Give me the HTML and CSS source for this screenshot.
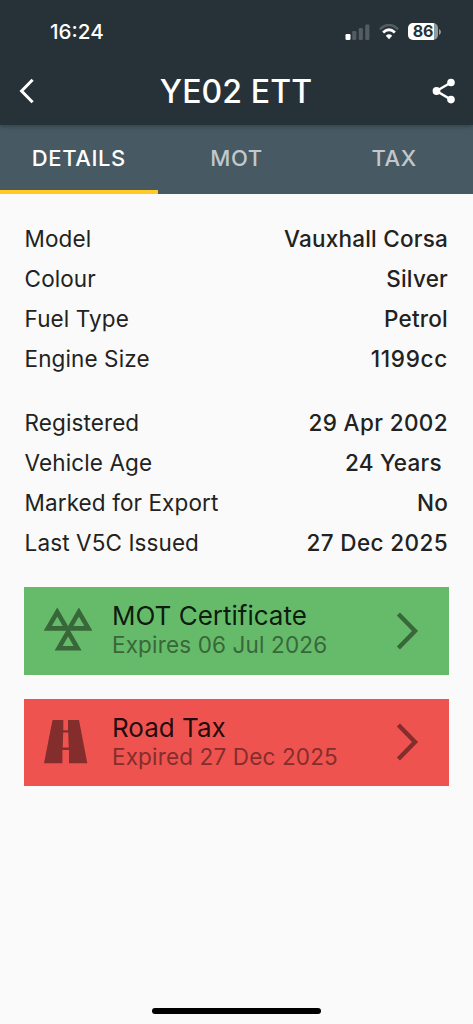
FILE: index.html
```html
<!DOCTYPE html>
<html lang="en">
<head>
<meta charset="utf-8">
<title>YE02 ETT</title>
<link rel="stylesheet" href="styles.css">
</head>
<body>
<div class="screen">
  <header class="header">
    <div class="status">
      <span class="clock">16:24</span>
      <div class="indicators">
        <svg class="signal" width="25" height="16" viewBox="0 0 25 16"><rect x="0.5" y="10" width="5" height="6" rx="1.3" fill="#fff"/><g fill="#535c60"><rect x="7.2" y="7" width="4.2" height="9" rx="1.2"/><rect x="13.7" y="4" width="4.2" height="12" rx="1.2"/><rect x="20.2" y="0.5" width="4.2" height="15.5" rx="1.2"/></g></svg>
        <svg class="wifi" width="20" height="16" viewBox="0 0 20 16"><path d="M1 5.2Q10-3.2 19 5.2" fill="none" stroke="#535c60" stroke-width="2.6"/><path d="M4.1 8.5Q10 3 15.9 8.5" fill="none" stroke="#fff" stroke-width="2.7"/><path d="M6.8 11.7Q10 9 13.2 11.7L10 15.2Z" fill="#fff"/></svg>
        <div class="battery"><span class="level">86</span></div>
        <svg class="cap" width="2" height="6" viewBox="0 0 2 6"><path d="M0 0Q2 1 2 3T0 6Z" fill="#929a9d"/></svg>
      </div>
    </div>
    <div class="toolbar">
      <svg width="16" height="26" viewBox="0 0 16 26"><path d="M13.6 1.8L2.6 13L13.6 24.2" fill="none" stroke="#fff" stroke-width="3"/></svg>
      <h1 class="title">YE02 ETT</h1>
      <svg width="24" height="26" viewBox="0 0 24 26"><path d="M19 4.5L4.5 13L19 21.6" fill="none" stroke="#fff" stroke-width="2.4"/><g fill="#fff"><circle cx="19" cy="4.5" r="3.8"/><circle cx="4.5" cy="13" r="3.9"/><circle cx="19" cy="21.6" r="3.8"/></g></svg>
    </div>
  </header>
  <nav class="tabs">
    <div class="tab active"><span>DETAILS</span></div>
    <div class="tab"><span>MOT</span></div>
    <div class="tab"><span>TAX</span></div>
  </nav>
  <main class="content">
    <section class="group">
      <div class="row"><span>Model</span><span class="value">Vauxhall Corsa</span></div>
      <div class="row"><span>Colour</span><span class="value">Silver</span></div>
      <div class="row"><span>Fuel Type</span><span class="value">Petrol</span></div>
      <div class="row"><span>Engine Size</span><span class="value numeric">1199cc</span></div>
    </section>
    <section class="group">
      <div class="row"><span>Registered</span><span class="value date">29 Apr 2002</span></div>
      <div class="row"><span>Vehicle Age</span><span class="value">24 Years </span></div>
      <div class="row"><span>Marked for Export</span><span class="value">No</span></div>
      <div class="row"><span>Last V5C Issued</span><span class="value date">27 Dec 2025</span></div>
    </section>
    <div class="cards">
      <div class="card valid">
        <svg class="icon" width="48" height="46" viewBox="0 0 48 46"><path fill="none" stroke="currentColor" stroke-width="4.6" d="M13.3 5L3.8 21.4H22.8Z M34.9 5L25.4 21.4H44.4Z M24.1 24.9L14.6 41.3H33.6Z"/></svg>
        <div class="text"><span class="name">MOT Certificate</span><span class="expiry">Expires 06 Jul 2026</span></div>
        <svg width="24" height="38" viewBox="0 0 24 38"><path d="M2.4 2L19 19L2.4 36" fill="none" stroke="currentColor" stroke-width="4.4"/></svg>
      </div>
      <div class="card expired">
        <svg class="icon" width="48" height="46" viewBox="0 0 48 46"><path fill="currentColor" d="M8.5 1H19.3V11.3H24V1H35L43.3 44.3H25V31H18.4V44.3H0Z"/><path class="gap" d="M19.2 13.5H24.2L24.7 28.6H18.7Z"/></svg>
        <div class="text"><span class="name">Road Tax</span><span class="expiry">Expired 27 Dec 2025</span></div>
        <svg width="24" height="38" viewBox="0 0 24 38"><path d="M2.4 2L19 19L2.4 36" fill="none" stroke="currentColor" stroke-width="4.4"/></svg>
      </div>
    </div>
  </main>
  <footer class="home"><div class="home-bar"></div></footer>
</div>
</body>
</html>
```
FILE: styles.css
```css
* { box-sizing: border-box; }
body { margin: 0; background: #fafafa; font-family: Inter, "Liberation Sans", sans-serif; color: #222; }
svg { display: block; flex: none; }
.screen { width: 473px; height: 1024px; display: flex; flex-direction: column; overflow: hidden; }
.header { position: relative; height: 125px; flex: none; background: #273238; color: #fff; box-shadow: 0 1px 5px rgba(0, 0, 0, .35); }
.status { height: 62px; padding: 1px 32px 0 50px; display: flex; align-items: center; justify-content: space-between; }
.clock { font-size: 20.6px; font-weight: 550; letter-spacing: 0; }
.indicators { display: flex; align-items: center; }
.wifi { margin: 0 9px; }
.battery { width: 30px; height: 17px; border-radius: 5px; display: grid; place-items: center; background: linear-gradient(90deg, #fff 86%, #929a9d 86%); color: #273238; }
.level { font-size: 16px; line-height: 17px; font-weight: 700; letter-spacing: -.2px; }
.cap { margin-left: 1px; }
.toolbar { height: 58px; padding: 0 17px 0 19px; display: flex; align-items: center; justify-content: space-between; }
.title { margin: 1px 0 0 5px; font-size: 32px; font-weight: 500; letter-spacing: .1px; }
.tabs { height: 69px; flex: none; display: grid; grid-template-columns: repeat(3, 1fr); background: #475a64; }
.tab { display: grid; place-items: center; padding-bottom: 4px; font-size: 22px; font-weight: 500; letter-spacing: .6px; color: #c2c8cb; border-bottom: 0 solid #ffca28; }
.tab.active { color: #fff; border-bottom-width: 4px; padding-bottom: 0; }
.content { flex: 1; padding: 24px 24px 0; }
.group { margin-bottom: 24px; }
.row { height: 40px; padding: 0 1px 0 .6px; display: flex; align-items: center; justify-content: space-between; font-size: 22.5px; letter-spacing: .1px; white-space: pre; }
.value { font-weight: 500; letter-spacing: .22px; }
.date { letter-spacing: .38px; }
.numeric { letter-spacing: .7px; }
.cards { padding-top: 1px; display: grid; gap: 24px; }
.card { height: 87.5px; padding: 0 29px 0 20px; display: flex; align-items: center; }
.icon { margin-top: -1px; }
.text { flex: 1; margin: -3px 0 0 20px; display: flex; flex-direction: column; }
.name { font-size: 26px; line-height: 31px; color: rgba(0, 0, 0, .87); }
.expiry { font-size: 22.5px; line-height: 27px; letter-spacing: .15px; }
.valid { background: #66bb6a; color: #38673a; }
.expired { background: #ef5350; color: #832e2c; }
.gap { fill: #ef5350; }
.home { height: 16px; flex: none; display: flex; justify-content: center; }
.home-bar { width: 169px; height: 6px; border-radius: 3px; background: #000; }
```
